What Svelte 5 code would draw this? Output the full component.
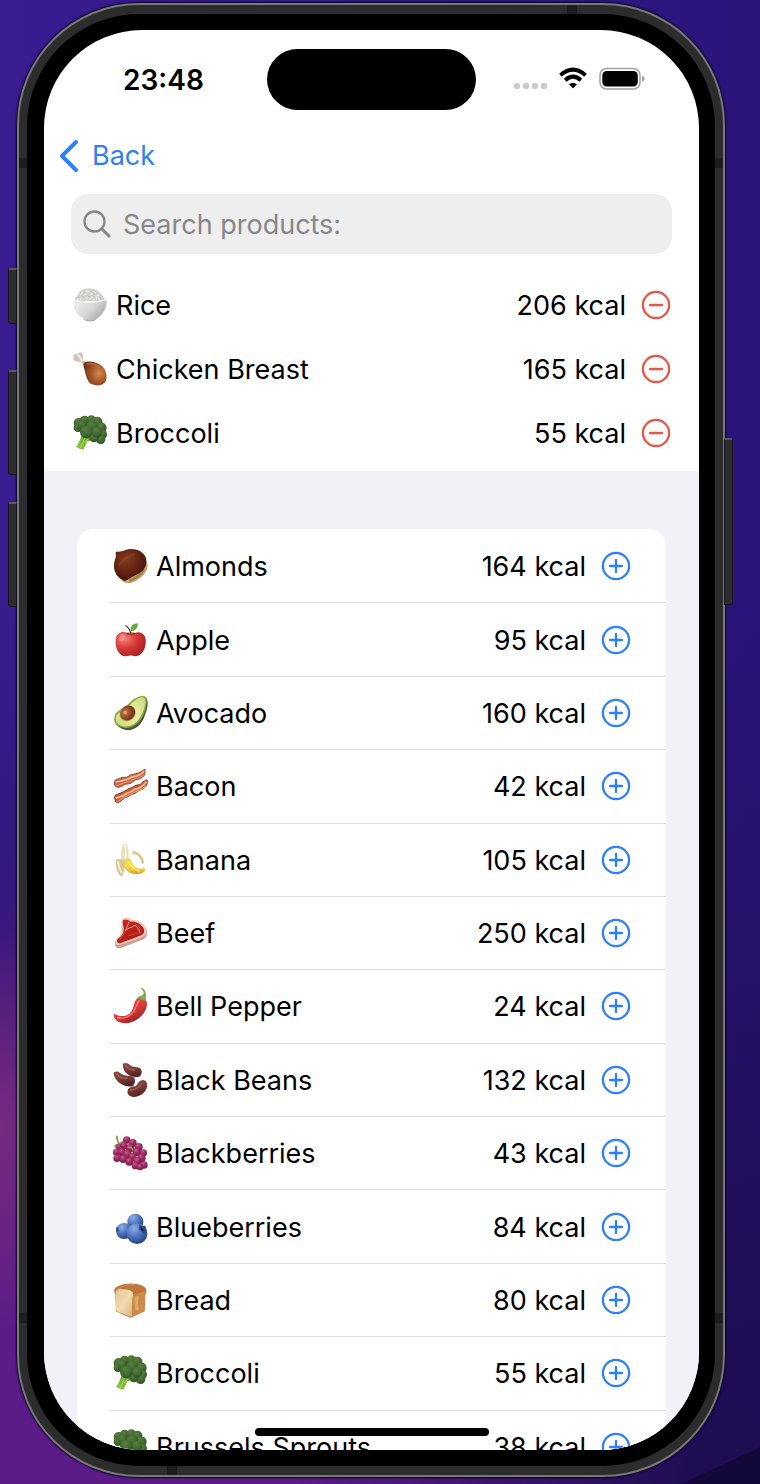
<script>
  const selected = [
    { icon: 'rice', name: 'Rice', kcal: 206 },
    { icon: 'chicken', name: 'Chicken Breast', kcal: 165 },
    { icon: 'broccoli', name: 'Broccoli', kcal: 55 }
  ];

  const catalog = [
    { icon: 'chestnut', name: 'Almonds', kcal: 164 },
    { icon: 'apple', name: 'Apple', kcal: 95 },
    { icon: 'avocado', name: 'Avocado', kcal: 160 },
    { icon: 'bacon', name: 'Bacon', kcal: 42 },
    { icon: 'banana', name: 'Banana', kcal: 105 },
    { icon: 'steak', name: 'Beef', kcal: 250 },
    { icon: 'pepper', name: 'Bell Pepper', kcal: 24 },
    { icon: 'beans', name: 'Black Beans', kcal: 132 },
    { icon: 'grapes', name: 'Blackberries', kcal: 43 },
    { icon: 'blueberries', name: 'Blueberries', kcal: 84 },
    { icon: 'bread', name: 'Bread', kcal: 80 },
    { icon: 'broccoli', name: 'Broccoli', kcal: 55 },
    { icon: 'broccoli', name: 'Brussels Sprouts', kcal: 38 }
  ];

  const florets = [
    [20, 24, 15], [38, 16, 14], [58, 15, 14], [76, 20, 15], [18, 38, 13],
    [88, 38, 16], [92, 58, 13], [86, 73, 14], [66, 68, 14], [60, 34, 17],
    [30, 30, 14], [75, 52, 16], [43, 51, 19]
  ];

  const grapes = [
    [22, 36, 10], [44, 15, 11], [62, 24, 12], [36, 32, 11], [80, 36, 12],
    [14, 52, 11], [54, 40, 13], [30, 52, 12], [74, 52, 12], [15, 70, 11],
    [46, 58, 13], [94, 54, 11], [62, 66, 12], [34, 72, 12], [88, 70, 13],
    [52, 80, 12], [76, 78, 12], [96, 90, 11], [70, 92, 11], [84, 96, 10]
  ];
</script>

{#snippet food(kind)}
  <svg class="food" viewBox="0 0 108 108" aria-hidden="true">
    {#if kind === 'rice'}
      <path d="M8 42C8 28 20 26 22 16C30 5 46 4 58 5C70 5 80 10 84 18C90 24 100 32 98 42Z" fill="#d3d0cb" />
      <path d="M14 38l7-5m3 6l4-8m5 5l8-4m3 6l2-8m7 6l8-4m2 6l6-6m5 6l-2-8m12 9l-6-5M26 22l6-5m3 8l8-4m1-9l7 3m4 8l7-3m3-6l6 4m2 8l7-2m-40-9l5-3" fill="none" stroke="#f4f2ee" stroke-width="3" stroke-linecap="round" />
      <path d="M19 31l5 2m9-3l5 2m11-4l5 3m12-3l4 3m12-1l4 3M39 15l4 2m19 0l5 2" fill="none" stroke="#b3aea7" stroke-width="2" stroke-linecap="round" />
      <path d="M4 38Q54 54 104 38C106 66 88 86 76 94Q68 103 54 103Q40 103 32 94C14 82 2 64 4 38Z" fill="url(#bowl)" />
      <path d="M4 38Q54 54 104 38" fill="none" stroke="#f8f8f8" stroke-width="3" />
      <path d="M34 96Q54 104 74 96Q68 103 54 103Q40 103 34 96Z" fill="#a6a6a6" />
    {:else if kind === 'chicken'}
      <path d="M4 18C2 8 12 8 17 10C18 2 30 1 31 9C35 18 30 24 38 31L46 40L38 46L29 35C22 30 16 34 10 29C2 28 1 22 8 19Z" fill="#cfc6b9" />
      <path d="M19 13C25 15 23 24 30 28" fill="none" stroke="#f4efe8" stroke-width="6" stroke-linecap="round" />
      <path d="M35 36C46 30 62 30 79 38C98 46 108 68 102 88C98 103 78 107 60 100C48 94 42 78 39 62C37 52 32 43 35 36Z" fill="url(#drumstick)" />
      <path d="M46 39C58 36 72 41 82 49" fill="none" stroke="#c98246" stroke-width="5" stroke-linecap="round" opacity=".6" />
    {:else if kind === 'broccoli'}
      <path d="M34 62L50 68L74 56L58 76L46 79L34 104Q24 102 12 96C18 90 24 76 28 64Z" fill="url(#stem)" />
      <path d="M38 70L26 98M47 72L38 84" stroke="#b4dd5c" stroke-width="3" fill="none" />
      <path d="M20 24L58 18L86 38L88 66L66 66L42 52L20 38Z" fill="#38602a" />
      {#each florets as [cx, cy, r]}
        <circle {cx} {cy} {r} fill="url(#floret)" />
      {/each}
    {:else if kind === 'chestnut'}
      <path d="M100 38Q110 44 106 60C102 78 82 98 56 105Q38 108 28 96Z" fill="#c9a56b" />
      <path d="M96 64Q84 88 52 98" fill="none" stroke="#806337" stroke-width="7" opacity=".6" />
      <path d="M11 18Q9 8 20 11Q28 10 34 9C50 0 78 1 92 16C106 28 106 46 98 60C91 72 82 76 72 81C58 86 50 96 38 99C18 92 5 74 6 52C6 36 14 28 11 18Z" fill="url(#chestnut)" />
      <path d="M22 50Q38 28 66 18" fill="none" stroke="#a65a39" stroke-width="8" stroke-linecap="round" opacity=".3" />
    {:else if kind === 'apple'}
      <path d="M56 38C38 24 14 28 11 53C8 79 23 105 43 103Q57 98 70 103C90 104 104 77 101 52C98 27 72 26 56 38Z" fill="url(#apple)" />
      <ellipse cx="56" cy="35" rx="13" ry="4" fill="#8e1b1c" opacity=".7" />
      <path d="M57 36Q54 20 42 11" fill="none" stroke="#65402a" stroke-width="4" stroke-linecap="round" />
      <path d="M56 28C54 12 65 4 77 4C79 16 70 27 56 28Z" fill="#58a82d" />
      <path d="M59 25L74 8" stroke="#92cf57" stroke-width="2" />
      <ellipse cx="30" cy="47" rx="8" ry="12" fill="#fff" opacity=".2" transform="rotate(25 30 47)" />
    {:else if kind === 'avocado'}
      <path d="M90 4C111 3 110 31 101 54C92 84 78 103 48 106C24 104 8 88 7 72Z" fill="#4b5738" />
      <path d="M88 3C104 0 106 12 103 29C98 65 76 97 44 99C19 99 2 84 8 63C14 44 35 42 48 28C60 14 70 7 88 3Z" fill="#8fa642" />
      <path d="M87 7C99 5 102 15 99 30C93 61 74 92 45 94C22 96 7 82 12 65C18 49 39 47 52 32C63 20 73 11 87 7Z" fill="url(#avocado)" />
      <ellipse cx="47" cy="55" rx="26" ry="23" fill="#c2af56" transform="rotate(-42 47 55)" />
      <ellipse cx="47" cy="54" rx="24" ry="21" fill="url(#pit)" transform="rotate(-42 47 54)" />
      <circle cx="40" cy="52" r="5" fill="#f0b585" opacity=".75" />
    {:else if kind === 'bacon'}
      <g stroke-linejoin="round">
        <path d="M7 44C6 34 18 34 26 30C34 25 42 31 50 25C56 18 64 20 72 17C84 15 90 9 99 3L99 16C96 25 88 33 78 34C68 34 64 41 56 46C48 49 42 46 34 52C26 58 14 60 9 54Z" fill="#c9694a" stroke="#9e452e" stroke-width="3" />
        <path d="M11 43C22 38 30 40 38 36C50 35 54 27 64 26C78 26 86 20 97 9" fill="none" stroke="#f2c292" stroke-width="5" />
        <path d="M12 53C24 52 30 45 42 43C54 43 58 34 70 32C82 31 90 26 96 19" fill="none" stroke="#e6a079" stroke-width="3" />
        <path d="M8 91C6 79 16 80 24 76C32 71 36 71 44 66C52 58 58 62 66 55C74 48 82 54 89 46C94 39 100 38 105 35C108 44 104 54 98 59C92 66 84 64 77 70C70 78 62 77 55 82C46 90 40 86 34 93C26 102 16 106 11 102Z" fill="#c05b3d" stroke="#8f3c28" stroke-width="3" />
        <path d="M11 91C22 84 30 88 40 78C52 74 58 73 68 64C82 62 92 58 103 41" fill="none" stroke="#eeb384" stroke-width="6" />
        <path d="M14 101C28 96 34 86 48 83C58 80 64 72 76 69C88 66 96 60 101 53" fill="none" stroke="#e29670" stroke-width="4" />
      </g>
    {:else if kind === 'banana'}
      <path d="M61 26C79 26 101 42 96 66Q90 69 88 62C83 43 72 36 59 38Z" fill="#e9ddb7" />
      <path d="M65 30Q89 39 93 64" fill="none" stroke="#c6b376" stroke-width="3" />
      <path d="M35 45Q53 43 60 62C67 77 83 83 98 79Q102 84 97 89C77 103 48 97 36 75Z" fill="url(#banana)" />
      <path d="M48 57Q60 81 82 87" fill="none" stroke="#fff07a" stroke-width="4" stroke-linecap="round" />
      <path d="M29 54C25 28 30 5 38 4C47 4 51 22 49 49L38 58Z" fill="#e9dcb8" />
      <path d="M38 9Q43 22 40 47" fill="none" stroke="#fffbed" stroke-width="5" stroke-linecap="round" />
      <path d="M11 53Q27 49 38 54C39 76 35 98 29 104C17 99 10 75 11 53Z" fill="#d8c793" />
      <path d="M17 57Q21 79 29 94" fill="none" stroke="#f6edcf" stroke-width="6" />
    {:else if kind === 'steak'}
      <path d="M31 12C40 6 53 7 60 15Q84 14 99 35C110 50 106 66 95 73L63 85L25 100Q10 101 9 86C8 75 23 65 28 56C31 44 26 36 30 24Z" fill="#cf9d91" />
      <path d="M31 12C40 6 53 7 60 15Q84 14 97 34C107 48 102 60 92 65L60 77L25 89Q11 92 10 80C10 70 26 63 31 52C34 42 27 32 31 22Z" fill="#f1d0c4" />
      <path d="M34 15Q46 10 54 20Q78 16 94 38C101 52 94 58 84 62L57 73L24 85Q12 85 16 73C27 65 34 59 35 46C37 35 29 26 34 15Z" fill="url(#steak)" />
      <path d="M51 21L40 48Q46 39 60 36Q69 27 76 37T84 55" fill="none" stroke="#e9a597" stroke-width="3" />
      <path d="M39 51L21 77M69 25Q84 33 88 47M50 62L77 54" stroke="#e15b4b" stroke-width="2" fill="none" />
    {:else if kind === 'pepper'}
      <path d="M74 32Q96 27 104 42C110 67 82 99 49 105C28 108 7 100 5 82Q4 75 12 80C40 91 56 80 63 60Q67 41 74 32Z" fill="url(#pepper)" />
      <path d="M81 39C73 44 73 65 60 77C50 88 32 93 17 89" fill="none" stroke="#ff938a" stroke-width="5" stroke-linecap="round" opacity=".6" />
      <path d="M73 34Q78 23 89 23Q99 18 93 8Q91 3 87 4Q84 1 88 0Q98 1 100 12C105 23 98 29 105 43Q96 34 91 37Q81 30 73 34Z" fill="#83a84b" />
    {:else if kind === 'beans'}
      <g fill="url(#bean)">
        <path d="M33 13C28 2 42 0 51 7C58 14 64 15 76 16C92 18 93 36 82 44C60 50 35 36 33 13Z" />
        <path d="M5 37C3 28 16 26 24 33C34 41 42 41 53 42C70 41 75 60 62 72C40 79 10 61 5 37Z" />
        <path d="M47 94C44 80 54 75 67 73C76 72 76 62 85 56C101 49 109 62 104 79C96 103 56 115 47 94Z" />
      </g>
      <g fill="none" stroke="#b9827a" stroke-width="4" stroke-linecap="round" opacity=".6">
        <path d="M40 10Q50 23 68 24" />
        <path d="M13 37Q28 51 45 49" />
        <path d="M56 84Q82 82 90 64" />
      </g>
    {:else if kind === 'grapes'}
      <path d="M15 4Q14 18 23 28Q38 36 44 42M22 27Q7 29 10 36M23 27Q35 14 42 27" fill="none" stroke="#7e9f49" stroke-width="5" stroke-linecap="round" />
      {#each grapes as [cx, cy, r]}
        <circle {cx} {cy} {r} fill="url(#grape)" />
      {/each}
      <path d="M49 37Q62 36 62 45" stroke="#88a352" stroke-width="4" fill="none" stroke-linecap="round" />
    {:else if kind === 'blueberries'}
      <circle cx="70" cy="38" r="24" fill="url(#blueberry)" />
      <circle cx="36" cy="66" r="24" fill="url(#blueberry)" />
      <circle cx="75" cy="74" r="31" fill="url(#blueberry)" />
      <path d="M82 47Q90 54 100 50Q106 64 98 74Q90 74 88 66L80 63Z" fill="#2f4d88" />
      <path d="M85 52Q93 57 97 66L89 65Z" fill="#122348" />
      <path d="M13 55L20 55L19 62L23 66L16 67L12 70Z" fill="#344f7f" />
    {:else if kind === 'bread'}
      <path d="M10 35C2 26 8 15 22 11C38 2 74 2 91 11C106 17 105 31 100 38L98 88L56 107Q36 101 12 88Z" fill="#bd763a" />
      <path d="M12 35C7 22 19 18 36 22Q54 22 62 31Q66 38 62 46L60 101Q58 106 52 103L19 90Q12 87 12 80Z" fill="url(#crumb)" />
      <path d="M62 44Q70 37 100 27L97 86L60 105Z" fill="#cd8b4a" />
      <path d="M76 43Q70 61 76 84" fill="none" stroke="#e5b77c" stroke-width="10" opacity=".7" />
      <path d="M14 24Q34 6 68 8" fill="none" stroke="#d99454" stroke-width="4" stroke-linecap="round" opacity=".8" />
    {/if}
  </svg>
{/snippet}

{#snippet product(item, action)}
  {@render food(item.icon)}
  <span class="name">{item.name}</span>
  <span class="kcal">{item.kcal} kcal</span>
  <button class="round {action}" type="button" aria-label="{action} {item.name}">
    <svg viewBox="0 0 30 30" fill="none" stroke="currentColor" stroke-width="2.3" stroke-linecap="round">
      <circle cx="15" cy="15" r="13.1" />
      <path d={action === 'Add' ? 'M9 15H21M15 9V21' : 'M9 15H21'} />
    </svg>
  </button>
{/snippet}

<svg class="defs" aria-hidden="true">
  <defs>
    <linearGradient id="bowl" x2="1" y2=".6"><stop stop-color="#f1f1f1" /><stop offset=".55" stop-color="#d9d9d9" /><stop offset="1" stop-color="#aaa" /></linearGradient>
    <radialGradient id="drumstick" cx=".68" cy=".5" r=".65"><stop stop-color="#d98b4c" /><stop offset=".5" stop-color="#a85b2b" /><stop offset="1" stop-color="#743615" /></radialGradient>
    <linearGradient id="stem" x1="1" x2="0" y2="1"><stop stop-color="#4d8b24" /><stop offset="1" stop-color="#93cf3d" /></linearGradient>
    <radialGradient id="floret" cx=".42" cy=".28" r=".75"><stop stop-color="#5a7f3f" /><stop offset=".55" stop-color="#426a31" /><stop offset="1" stop-color="#2c5024" /></radialGradient>
    <radialGradient id="chestnut" cx=".38" cy=".32" r=".75"><stop stop-color="#853a20" /><stop offset=".6" stop-color="#5e2110" /><stop offset="1" stop-color="#34100a" /></radialGradient>
    <radialGradient id="apple" cx=".3" cy=".28" r=".85"><stop stop-color="#f38378" /><stop offset=".45" stop-color="#d83a37" /><stop offset="1" stop-color="#a11d21" /></radialGradient>
    <linearGradient id="avocado" x1="1" x2="0" y2="1"><stop stop-color="#cbd779" /><stop offset=".5" stop-color="#edefad" /><stop offset="1" stop-color="#c9d869" /></linearGradient>
    <radialGradient id="pit" cx=".4" cy=".35"><stop stop-color="#c47d50" /><stop offset="1" stop-color="#7b3b1a" /></radialGradient>
    <linearGradient id="banana" x2="0" y2="1"><stop stop-color="#eacb32" /><stop offset=".5" stop-color="#fbe046" /><stop offset="1" stop-color="#dca52b" /></linearGradient>
    <linearGradient id="steak" x2=".4" y2="1"><stop stop-color="#c9251e" /><stop offset="1" stop-color="#b01c16" /></linearGradient>
    <linearGradient id="pepper" x2=".7" y2="1"><stop stop-color="#ef5550" /><stop offset=".6" stop-color="#d83a38" /><stop offset="1" stop-color="#8f1c22" /></linearGradient>
    <linearGradient id="bean" x2=".3" y2="1"><stop stop-color="#8f4c44" /><stop offset=".6" stop-color="#753832" /><stop offset="1" stop-color="#552523" /></linearGradient>
    <radialGradient id="grape" cx=".4" cy=".28" r=".7"><stop stop-color="#c65c8d" /><stop offset=".5" stop-color="#9f2a60" /><stop offset="1" stop-color="#731a48" /></radialGradient>
    <radialGradient id="blueberry" cx=".35" cy=".25" r=".75"><stop stop-color="#8caee8" /><stop offset=".5" stop-color="#5179c3" /><stop offset="1" stop-color="#29447f" /></radialGradient>
    <linearGradient id="crumb" x2="1" y2="1"><stop stop-color="#e4c494" /><stop offset=".5" stop-color="#f0dcb0" /><stop offset="1" stop-color="#d7b077" /></linearGradient>
  </defs>
</svg>

<div class="desktop">
  <div class="device">
    <i class="key silent"></i>
    <i class="key up"></i>
    <i class="key down"></i>
    <i class="key power"></i>
    <div class="band">
      <i class="seam top"></i>
      <i class="seam bottom"></i>
      <i class="seam left-high"></i>
      <i class="seam left-low"></i>
      <i class="seam right-high"></i>
      <i class="seam right-low"></i>
      <div class="bezel">
        <main class="screen">
          <header class="status">
            <time>23:48</time>
            <div class="island"></div>
            <div class="signals">
              <svg width="33" height="30" viewBox="0 0 33 30" fill="#cbcbcb" aria-hidden="true">
                <rect y="18" width="6" height="6" rx="2" /><rect x="9" y="18" width="6" height="6" rx="2" /><rect x="18" y="18" width="6" height="6" rx="2" /><rect x="27" y="18" width="6" height="6" rx="2" />
              </svg>
              <svg width="28" height="30" viewBox="0 0 28 30" fill="none" stroke="#000" stroke-width="4" aria-hidden="true">
                <path d="M1.500 10.200Q14 -.8 26.500 10.200" />
                <path d="M6.200 15.200Q14 8.200 21.800 15.200" />
                <path d="M10 19.300Q14 16.500 18 19.300L14 23.500Z" fill="#000" stroke="none" />
              </svg>
              <svg width="46" height="30" viewBox="0 0 46 30" aria-hidden="true">
                <rect x="1" y="3.500" width="40" height="20.500" rx="6.500" fill="none" stroke="#a0a0a0" stroke-width="1.500" />
                <rect x="3.300" y="6" width="35.500" height="15.500" rx="4.500" />
                <path d="M43 10.500Q45.500 11.500 45.500 13.700T43 17Z" fill="#a0a0a0" />
              </svg>
            </div>
          </header>

          <nav>
            <button class="back" type="button">
              <svg width="20" height="34" viewBox="0 0 20 34" fill="none" stroke="currentColor" stroke-width="4" stroke-linecap="round" stroke-linejoin="round" aria-hidden="true"><path d="M18 3L4 17L18 31" /></svg>
              Back
            </button>
          </nav>

          <label class="search">
            <svg width="28" height="28" viewBox="0 0 28 28" fill="none" stroke="#87878b" stroke-linecap="round" aria-hidden="true"><circle cx="11.500" cy="11.500" r="10" stroke-width="2.300" /><path d="M19 19L26 26" stroke-width="3" /></svg>
            <input type="text" placeholder="Search products:" aria-label="Search products" />
          </label>

          <ul class="selected">
            {#each selected as item}
              <li>{@render product(item, 'Remove')}</li>
            {/each}
          </ul>

          <section class="catalog">
            <ul class="card">
              {#each catalog as item}
                <li>{@render product(item, 'Add')}</li>
              {/each}
            </ul>
          </section>
          <i class="home"></i>
        </main>
      </div>
    </div>
  </div>
</div>

<style>
  :global(body) { margin: 0; }
  * { box-sizing: border-box; }
  .defs { position: absolute; width: 0; height: 0; }

  .desktop {
    display: flex;
    height: 100vh;
    padding: 3px 35px 7px 17px;
    overflow: hidden;
    font-family: Inter, "Liberation Sans", sans-serif;
    font-size: 27px;
    line-height: 34px;
    color: #000;
    background:
      linear-gradient(155deg, transparent 98%, #13083a 98%),
      radial-gradient(ellipse 120px 200px at 0 1130px, #762a80 0%, transparent 100%),
      radial-gradient(ellipse 700px 640px at 0 100%, #5c1c88 40%, transparent 100%),
      linear-gradient(to bottom, transparent 40%, rgba(24, 10, 66, .75) 100%),
      linear-gradient(to right, #391c90, #2a147a);
  }

  .device {
    position: relative;
    flex: 1;
    display: flex;
    padding: 2px;
    border-radius: 122px;
    background: #777;
    box-shadow: 0 0 2px 1px #0a0524;
  }
  .band {
    position: relative;
    flex: 1;
    display: flex;
    padding: 9px 8px;
    border-radius: 120px;
    background: #2c2c2c;
  }
  .bezel {
    position: relative;
    flex: 1;
    display: flex;
    padding: 16px 16px 16px 17px;
    border-radius: 112px;
    background: #000;
  }
  .screen {
    position: relative;
    flex: 1;
    display: flex;
    flex-direction: column;
    min-width: 0;
    overflow: hidden;
    border-radius: 98px;
    background: #fff;
  }

  .key {
    position: absolute;
    left: -9px;
    width: 9px;
    border: 1px solid #18131f;
    border-top: 2px solid #5a5a5a;
    border-radius: 3px 0 0 3px;
    background: #2c2c2c;
  }
  .silent { top: 265px; height: 56px; }
  .up { top: 367px; height: 105px; }
  .down { top: 499px; height: 105px; }
  .power { left: auto; right: -8px; top: 435px; height: 167px; border-radius: 0 3px 3px 0; }

  .seam { position: absolute; width: 8px; height: 10px; background: #1d1d1d; }
  .seam.top { top: 0; right: 146px; width: 10px; height: 9px; }
  .seam.bottom { bottom: 0; left: 148px; width: 10px; height: 9px; }
  .left-high { left: 0; top: 153px; }
  .right-high { right: 0; top: 153px; }
  .left-low { left: 0; bottom: 152px; }
  .right-low { right: 0; bottom: 152px; }

  .status {
    display: grid;
    grid-template-columns: 1fr 209px 1fr;
    align-items: center;
    padding-top: 19px;
  }
  time { padding-left: 16px; text-align: center; font-size: 28px; font-weight: 600; }
  .island { height: 61px; border-radius: 31px; background: #000; }
  .signals { display: flex; gap: 12px; padding-left: 38px; }

  nav { padding: 27px 14px 19px; }
  button { padding: 0; border: 0; background: none; font: inherit; cursor: pointer; }
  .back { display: flex; align-items: center; gap: 14px; height: 38px; color: #2e80f7; }

  .search {
    display: flex;
    align-items: center;
    gap: 12px;
    height: 60px;
    flex: none;
    margin: 0 27px;
    padding: 0 12px;
    border-radius: 17px;
    background: #eee;
  }
  input { flex: 1; min-width: 0; padding: 2px 0 0; border: 0; outline: 0; background: none; font: inherit; color: #000; }
  input::placeholder { color: #87878b; opacity: 1; }

  ul { margin: 0; padding: 0; list-style: none; }
  li { display: flex; align-items: center; }
  .food { flex: none; width: 36px; height: 36px; margin-right: 8px; }
  .name { flex: 1; padding-top: 2px; white-space: nowrap; }
  .kcal { margin-right: 15px; padding-top: 2px; white-space: nowrap; }
  .round { width: 30px; height: 30px; }
  .round svg { display: block; }
  .Add { color: #2e80f7; }
  .Remove { color: #eb5545; }

  .selected { padding: 19px 28px 6px; }
  .selected li { height: 64px; }

  .catalog { flex: 1; min-height: 0; padding: 58px 33px 0; background: #f2f1f7; }
  .card {
    display: grid;
    grid-auto-rows: 1fr;
    min-height: 955px;
    padding: 1px 0 0 33px;
    border-radius: 17px;
    background: #fff;
  }
  .card li { padding: 0 35px 0 2px; border-bottom: 1px solid #dedee0; }

  .home {
    position: absolute;
    bottom: 14px;
    left: 50%;
    width: 234px;
    height: 8px;
    border-radius: 4px;
    background: #000;
    transform: translateX(-50%);
  }
</style>
